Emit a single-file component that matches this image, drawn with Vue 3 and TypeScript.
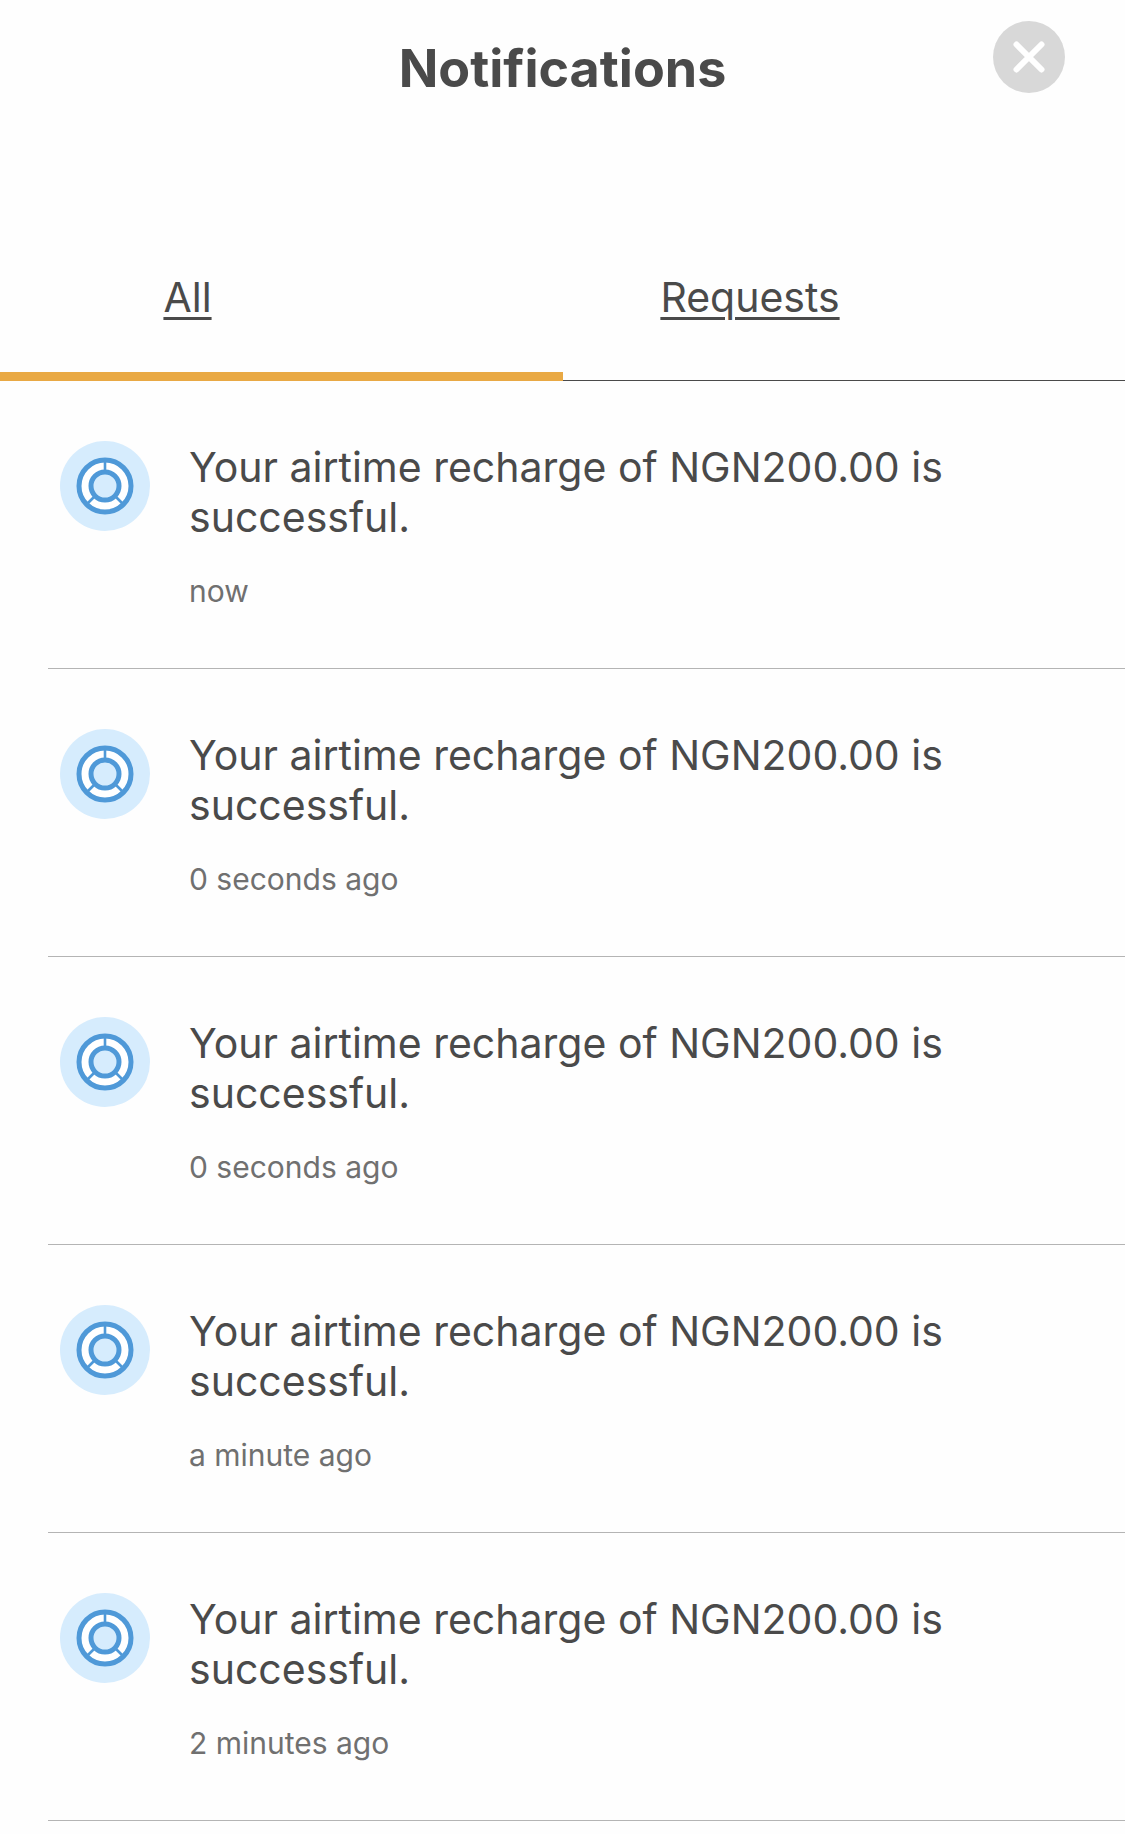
<script setup lang="ts">
import { ref } from 'vue'

interface Notice {
  id: number
  message: string
  time: string
}

interface Tab {
  id: string
  label: string
}

const tabs: Tab[] = [
  { id: 'all', label: 'All' },
  { id: 'requests', label: 'Requests' },
]

const activeTab = ref('all')

const message = 'Your airtime recharge of NGN200.00 is successful.'
const times = ['now', '0 seconds ago', '0 seconds ago', 'a minute ago', '2 minutes ago']
const notices: Notice[] = times.map((time, id) => ({ id, message, time }))
</script>

<template>
  <main class="page">
    <header class="header">
      <h1 class="title">Notifications</h1>
      <button class="close" type="button" aria-label="Close">
        <svg viewBox="0 0 72 72" aria-hidden="true">
          <path d="M23.5 23.5L48.5 48.5M48.5 23.5L23.5 48.5" />
        </svg>
      </button>
    </header>

    <nav class="tabs">
      <a
        v-for="tab in tabs"
        :key="tab.id"
        :href="'#' + tab.id"
        class="tab"
        :class="{ active: activeTab === tab.id }"
        @click.prevent="activeTab = tab.id"
      >{{ tab.label }}</a>
    </nav>

    <ul class="list">
      <li v-for="notice in notices" :key="notice.id" class="item">
        <svg class="avatar" viewBox="0 0 90 90" aria-hidden="true">
          <circle cx="45" cy="45" r="45" fill="#d6ecfd" />
          <circle cx="45" cy="45" r="20" fill="none" stroke="#fff" stroke-width="9" />
          <g fill="none" stroke="#4f99d8">
            <circle cx="45" cy="45" r="26" stroke-width="5" />
            <circle cx="45" cy="45" r="14" stroke-width="5" />
            <path stroke-width="2.6" d="M45 20V31M35.5 54.5L27.5 62.5M54.5 54.5L62.5 62.5" />
          </g>
        </svg>
        <div class="body">
          <p class="message">{{ notice.message }}</p>
          <p class="time">{{ notice.time }}</p>
        </div>
      </li>
    </ul>
  </main>
</template>

<style>
body {
  margin: 0;
  background: #fefefe;
}
</style>

<style scoped>
.page {
  font-family: Inter, "Liberation Sans", sans-serif;
  color: #4a4a4a;
}

.header {
  display: grid;
  grid-template-columns: 72px 1fr 72px;
  align-items: start;
  padding: 21px 60px 121px;
}

.title {
  grid-column: 2;
  margin: 16px 0 0;
  font-size: 52px;
  line-height: 64px;
  font-weight: 700;
  text-align: center;
}

.close {
  width: 72px;
  height: 72px;
  padding: 0;
  border: 0;
  border-radius: 50%;
  background: #d8d8d8;
  cursor: pointer;
}

.close svg {
  display: block;
  width: 100%;
  fill: none;
  stroke: #fff;
  stroke-width: 6;
  stroke-linecap: round;
}

.tabs {
  display: grid;
  grid-template-columns: 1fr 1fr;
}

.tab {
  padding: 50px 33.333% 58px 0;
  border-bottom: 1px solid #4a4a4a;
  color: inherit;
  font-size: 41px;
  line-height: 50px;
  text-align: center;
  text-decoration: underline;
  text-decoration-thickness: 3px;
  text-underline-offset: 5px;
}

.tab.active {
  padding-bottom: 50px;
  border-bottom: 9px solid #e9a944;
}

.list {
  margin: 0 0 0 48px;
  padding: 0;
  list-style: none;
}

.item {
  display: flex;
  align-items: flex-start;
  gap: 39px;
  padding: 60px 120px 59px 12px;
  border-bottom: 1px solid #b4b4b4;
}

.avatar {
  flex: none;
  width: 90px;
  height: 90px;
}

.body {
  flex: 1;
  padding-top: 1px;
}

.message {
  margin: 0;
  font-size: 41px;
  line-height: 50px;
}

.time {
  margin: 31px 0 0;
  color: #707070;
  font-size: 30px;
  line-height: 36px;
}
</style>
